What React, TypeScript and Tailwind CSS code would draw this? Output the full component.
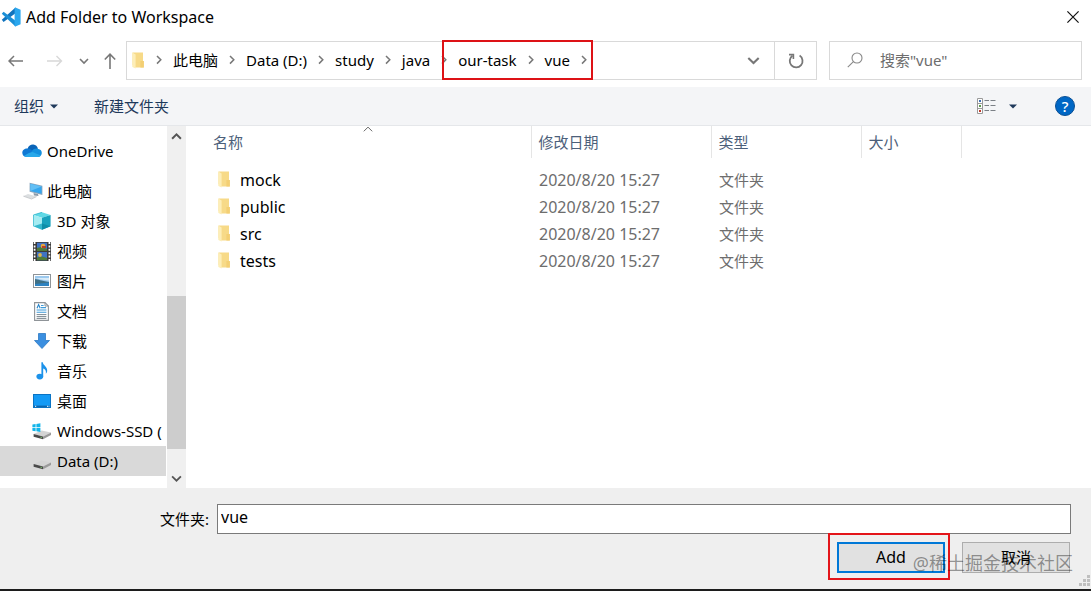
import type { ReactNode } from 'react'

const crumbs = ['此电脑', 'Data (D:)', 'study', 'java']
const activeCrumbs = ['our-task', 'vue']

const files = [
  { name: 'mock', date: '2020/8/20 15:27', type: '文件夹' },
  { name: 'public', date: '2020/8/20 15:27', type: '文件夹' },
  { name: 'src', date: '2020/8/20 15:27', type: '文件夹' },
  { name: 'tests', date: '2020/8/20 15:27', type: '文件夹' },
]

const CodeLogo = () => (
  <svg width="20" height="20" viewBox="0 0 20 20">
    <path d="M14.5 0.6 L0.8 12.8 L2.6 14.9 L15.5 5.4 Z" fill="#1173bd" />
    <path d="M0.8 6.8 L2.6 4.8 L15.5 14.4 L14.5 19.4 Z" fill="#1b8fd6" />
    <path d="M14.4 0.4 L19.6 2.8 V17.2 L14.4 19.6 L13.6 19 V1 Z" fill="#2ba7ee" />
  </svg>
)

const FolderIcon = () => (
  <svg width="12" height="17" viewBox="0 0 12 17" className="shrink-0">
    <path d="M0.5 0.5 H11 V9 H11.8 V15.5 H3 L0.5 13 Z" fill="#f7da88" />
    <path d="M0.3 0.5 L3.6 2.4 V16.5 L0.3 15 Z" fill="#fdeeb8" />
    <path d="M8.4 9 H11.8 V15.5 H8.4 Z" fill="#f3cf74" />
  </svg>
)

const Chevron = () => (
  <svg width="6" height="10" viewBox="0 0 6 10">
    <path d="M1 1 L4.8 4.8 L1 8.6" fill="none" stroke="#777" strokeWidth="1.5" />
  </svg>
)

const DownChevron = ({ size = 10, color = '#777' }: { size?: number; color?: string }) => (
  <svg width={size} height={size} viewBox="0 0 10 10">
    <path d="M1 3 L5 7 L9 3" fill="none" stroke={color} strokeWidth="1.6" />
  </svg>
)

const UpChevron = () => (
  <svg width="11" height="11" viewBox="0 0 10 10">
    <path d="M1 7 L5 3 L9 7" fill="none" stroke="#555" strokeWidth="1.8" />
  </svg>
)

const Caret = () => (
  <svg width="8" height="5" viewBox="0 0 8 5">
    <path d="M0 0.5 H8 L4 4.5 Z" fill="#1e395b" />
  </svg>
)

const CloudIcon = () => (
  <svg width="20" height="14" viewBox="0 0 20 14">
    <path d="M5.5 5 C6.5 1.5 9.2 0.4 11.3 0.6 C13.8 0.9 15.3 2.4 15.9 4.6 L11 9 Z" fill="#0a64b8" />
    <path d="M4.6 12.9 C1.8 12.9 0.3 11 0.3 8.8 C0.3 6.3 2.6 4.4 5.2 4.5 C7.6 4.2 9.5 5.8 12 8 L8 12.9 Z" fill="#0f78d4" />
    <path d="M9.8 7 C11.4 4.6 14.6 4 16.2 5 C18.7 5.2 19.8 7 19.8 9 C19.8 11.4 18 12.9 16 12.9 H8 Z" fill="#1490df" />
    <path d="M2 12 C5 9.5 8 8.6 10.5 8 L18.8 11.6 C18 12.6 17 12.9 16 12.9 H4.6 C3.6 12.9 2.7 12.6 2 12 Z" fill="#28a8ea" />
  </svg>
)

const ComputerIcon = () => (
  <svg width="20" height="18" viewBox="0 0 20 18">
    <path d="M6.6 0.8 L19.4 3.8 V13 L6.6 9.8 Z" fill="#8aa5bd" />
    <path d="M7.4 1.8 L18.6 4.5 V11.8 L7.4 9 Z" fill="#35a6ee" />
    <path d="M7.4 1.8 L18.6 4.5 L7.4 9 Z" fill="#62bff5" />
    <path d="M10.5 11 L15 12 L15.5 14 L11 13.5 Z" fill="#8b9aa8" />
    <path d="M0.4 14 L5 12 L13.6 14.4 L8.6 16.8 Z" fill="#dcdfe1" />
    <path d="M0.4 14.2 L8.6 17 L13.6 14.6" fill="none" stroke="#b4b8bb" strokeWidth="0.7" />
  </svg>
)

const CubeIcon = () => (
  <svg width="18" height="18" viewBox="0 0 18 18">
    <path d="M9 0.3 L17.6 3 L9 5.8 L0.4 3 Z" fill="#5fd9e6" />
    <path d="M0.4 3 L9 5.8 V17.7 L0.4 14.2 Z" fill="#a5ecf2" />
    <path d="M0.4 14.2 L9 11.5 V17.7 Z" fill="#35b8ce" />
    <path d="M17.6 3 L9 5.8 V17.7 L17.6 14.2 Z" fill="#18a2bd" />
    <path d="M9 11.5 L17.6 14.2 L9 17.7 Z" fill="#0d8ea8" />
    <path d="M0.4 3 V14.2 M9 0.3 L0.4 3" stroke="#2bb5cc" strokeWidth="0.8" fill="none" />
  </svg>
)

const VideoIcon = () => (
  <svg width="18" height="19" viewBox="0 0 18 19">
    <rect width="18" height="19" fill="#3b3b3b" />
    <rect x="4" y="0.8" width="10" height="8.2" fill="#3f73c4" />
    <rect x="4" y="10" width="10" height="8.2" fill="#3f73c4" />
    <path d="M4 9 V6 L8 5 L14 7 V9 Z M4 18.2 V15.4 L9 14.5 L14 16 V18.2 Z" fill="#4f7b3a" />
    <circle cx="10" cy="4" r="2.3" fill="#e9a63a" />
    <circle cx="7" cy="13" r="1.9" fill="#d9b64c" />
    <path d="M9 4 H13 V6 H9 Z" fill="#b5402c" />
    <path d="M1.6 0 V19 M16.4 0 V19" stroke="#fff" strokeWidth="1.7" strokeDasharray="2 1.4" />
  </svg>
)

const PictureIcon = () => (
  <svg width="18" height="14" viewBox="0 0 18 14">
    <rect x="0.5" y="0.5" width="17" height="13" fill="#fff" stroke="#8f9498" />
    <rect x="2" y="2" width="14" height="10" fill="#9cc9ee" />
    <path d="M2 5 C5 5.5 8 6.6 16 8 V12 H2 Z" fill="#3f7086" />
    <path d="M2 10 L16 8.6 V12 H2 Z" fill="#2e83c2" />
    <path d="M2 4 L8 5.5 L16 6.5 V4 Z" fill="#d9ecf9" />
  </svg>
)

const DocumentIcon = () => (
  <svg width="15" height="19" viewBox="0 0 15 19">
    <path d="M0.6 0.6 H11 L14.4 4 V18.4 H0.6 Z" fill="#fff" stroke="#8f9498" strokeWidth="1.1" />
    <path d="M11 0.6 V4 H14.4" fill="none" stroke="#8f9498" />
    <path d="M3 6.2 L4.6 2.6 L6.2 6.2" fill="none" stroke="#2383c9" strokeWidth="1.1" />
    <path d="M7 3.5 H9.6 M7 5.6 H12 M2.6 8 H12.4 M2.6 10.3 H12.4" stroke="#3f9bd9" strokeWidth="1.1" />
    <path d="M2.6 12.6 H12.4 M2.6 14.6 H12.4 M2.6 16.4 H12.4" stroke="#7a8790" />
  </svg>
)

const DownloadIcon = () => (
  <svg width="16" height="16" viewBox="0 0 16 16">
    <path d="M4.5 0.5 H11.5 V7.5 H15.5 L8 15.5 L0.5 7.5 H4.5 Z" fill="#3b8fe0" stroke="#2b78c4" strokeWidth="0.8" />
  </svg>
)

const MusicIcon = () => (
  <svg width="12" height="18" viewBox="0 0 12 18">
    <ellipse cx="3.8" cy="14.6" rx="3.4" ry="2.8" fill="#1c92ea" />
    <path d="M5.4 0.3 H6.8 C7.2 3.6 11.6 4.6 11.2 9 C11 10.4 10.4 11.2 9.8 11.8 C10.6 8.6 8.6 7 7.2 6.6 V14.6 H5.4 Z" fill="#1c92ea" />
  </svg>
)

const DesktopIcon = () => (
  <svg width="18" height="14" viewBox="0 0 18 14">
    <rect x="0.5" y="0.5" width="17" height="13" fill="#149af5" stroke="#0b74c4" />
    <path d="M1 12.3 H17" stroke="#0c66ae" strokeWidth="1.4" />
    <path d="M2 12.3 H3.2 M14 12.3 H15 M15.6 12.3 H16.4" stroke="#fff" />
  </svg>
)

const DriveIcon = ({ windows = false }: { windows?: boolean }) => (
  <svg width="20" height="17" viewBox="0 0 20 17">
    <path d="M1.6 11 L9.6 7.4 L19 9.4 L11 13.4 Z" fill="#d4d4d4" />
    <path d="M1.6 11 L11 13.4 V16.2 L1.6 13.8 Z" fill="#4a4a4a" />
    <path d="M11 13.4 L19 9.4 V12 L11 16.2 Z" fill="#9a9a9a" />
    <path d="M8.4 14.2 L10 14.6" stroke="#7fd36a" strokeWidth="0.8" />
    {windows && (
      <path
        d="M0.4 1.6 L3.6 1 V4.2 H0.4 Z M4.4 0.9 L8.4 0.2 V4.2 H4.4 Z M0.4 5 H3.6 V8.2 L0.4 7.7 Z M4.4 5 H8.4 V9 L4.4 8.3 Z"
        fill="#12b5ea"
      />
    )}
  </svg>
)

const places: { label: string; icon: ReactNode; selected?: boolean }[] = [
  { label: '3D 对象', icon: <CubeIcon /> },
  { label: '视频', icon: <VideoIcon /> },
  { label: '图片', icon: <PictureIcon /> },
  { label: '文档', icon: <DocumentIcon /> },
  { label: '下载', icon: <DownloadIcon /> },
  { label: '音乐', icon: <MusicIcon /> },
  { label: '桌面', icon: <DesktopIcon /> },
  { label: 'Windows-SSD (', icon: <DriveIcon windows /> },
  { label: 'Data (D:)', icon: <DriveIcon />, selected: true },
]

function Crumb({ label }: { label: string }) {
  return (
    <>
      <button type="button" className="whitespace-nowrap">
        {label}
      </button>
      <span className="flex w-7 shrink-0 justify-center">
        <Chevron />
      </span>
    </>
  )
}

function TitleBar() {
  return (
    <header className="flex h-[35px] items-center justify-between pr-3 pb-0.5 pl-px">
      <div className="flex items-center gap-[5px]">
        <CodeLogo />
        <h1 className="text-base">Add Folder to Workspace</h1>
      </div>
      <button type="button" aria-label="Close">
        <svg width="12" height="12" viewBox="0 0 12 12">
          <path d="M0.4 0.4 L11.6 11.6 M11.6 0.4 L0.4 11.6" stroke="#111" strokeWidth="1.2" />
        </svg>
      </button>
    </header>
  )
}

function NavBar() {
  return (
    <nav className="flex items-center pt-1.5 pr-[9px] pb-[7px] pl-2">
      <div className="flex w-[118px] shrink-0 items-center">
        <button type="button" aria-label="Back">
          <svg width="16" height="12" viewBox="0 0 16 12">
            <path d="M15 6 H1 M6 1 L1 6 L6 11" fill="none" stroke="#777" strokeWidth="1.5" />
          </svg>
        </button>
        <button type="button" aria-label="Forward" className="ml-[23px]">
          <svg width="16" height="12" viewBox="0 0 16 12">
            <path d="M0 6 H14 M9.5 1 L14.5 6 L9.5 11" fill="none" stroke="#d8d8d8" strokeWidth="1.4" />
          </svg>
        </button>
        <button type="button" aria-label="Recent" className="ml-4">
          <DownChevron />
        </button>
        <button type="button" aria-label="Up" className="ml-[15px]">
          <svg width="12" height="16" viewBox="0 0 12 16">
            <path d="M6 16 V1 M0.8 6.5 L6 1.2 L11.2 6.5" fill="none" stroke="#777" strokeWidth="1.6" />
          </svg>
        </button>
      </div>
      <div className="flex h-[39px] min-w-0 flex-1 items-center border border-[#d9d9d9]">
        <div className="flex flex-1 items-center pb-px pl-[5px]">
          <FolderIcon />
          <span className="flex w-[29px] justify-center">
            <Chevron />
          </span>
          {crumbs.map((label) => (
            <Crumb key={label} label={label} />
          ))}
          <span className="relative flex items-center">
            {activeCrumbs.map((label) => (
              <Crumb key={label} label={label} />
            ))}
            <span className="absolute -inset-y-2 right-[5px] -left-4 border-2 border-[#dd1216]" />
          </span>
        </div>
        <button type="button" aria-label="History" className="px-3.5">
          <DownChevron size={13} />
        </button>
        <button
          type="button"
          aria-label="Refresh"
          className="flex h-full w-[42px] items-center justify-center border-l border-[#d9d9d9]"
        >
          <svg width="16" height="16" viewBox="0 0 16 16">
            <path d="M11.6 2.6 A6.4 6.4 0 1 1 4.4 2.8" fill="none" stroke="#777" strokeWidth="1.8" />
            <path d="M1 1.6 H5.4 V6" fill="none" stroke="#777" strokeWidth="1.6" />
          </svg>
        </button>
      </div>
      <label className="ml-3 flex h-[39px] w-[253px] shrink-0 items-center gap-[17px] border border-[#d9d9d9] pb-px pl-[17px]">
        <svg width="16" height="16" viewBox="0 0 16 16" className="shrink-0">
          <circle cx="10" cy="6" r="5" fill="none" stroke="#888" strokeWidth="1.1" />
          <path d="M6.4 9.6 L0.8 15.2" stroke="#888" strokeWidth="1.1" />
        </svg>
        <input
          type="search"
          aria-label="Search"
          placeholder={'搜索"vue"'}
          className="w-full min-w-0 outline-none placeholder:text-[#6d6d6d]"
        />
      </label>
    </nav>
  )
}

function Toolbar() {
  return (
    <div className="flex h-[39px] items-center border-b border-[#e5e7ea] bg-[#f4f5f7] pr-4 pl-3.5 text-[#1e395b]">
      <button type="button" className="flex items-center gap-1.5">
        组织
        <Caret />
      </button>
      <button type="button" className="ml-9">
        新建文件夹
      </button>
      <button type="button" aria-label="View" className="ml-auto flex items-center gap-3">
        <svg width="20" height="16" viewBox="0 0 20 16">
          <path d="M0.5 0.5 H5.5 V15.5 H0.5 Z M0.5 5.5 H5.5 M0.5 10.5 H5.5" fill="#fff" stroke="#9a9a9a" />
          <path d="M2 3 H4" stroke="#3d6fb5" strokeWidth="2" />
          <path d="M2 8 H4" stroke="#5a9a4a" strokeWidth="2" />
          <path d="M2 13 H4" stroke="#c0392b" strokeWidth="2" />
          <path d="M7.5 2.5 H12 M13.5 2.5 H18.5 M7.5 7.5 H12 M13.5 7.5 H18.5 M7.5 12.5 H12 M13.5 12.5 H18.5" stroke="#7b8086" />
        </svg>
        <Caret />
      </button>
      <button
        type="button"
        aria-label="Help"
        className="ml-[38px] flex size-5 items-center justify-center rounded-full border border-[#0a4f94] bg-[#0067c5] font-medium text-white"
      >
        ?
      </button>
    </div>
  )
}

function Sidebar() {
  return (
    <aside className="flex w-[187px] shrink-0">
      <div className="w-[167px] overflow-hidden pt-2.5">
        <button type="button" className="flex h-[30px] w-full items-center gap-[5px] pl-[22px]">
          <CloudIcon />
          OneDrive
        </button>
        <button type="button" className="mt-2.5 flex h-[30px] w-full items-center gap-1 pl-[23px]">
          <ComputerIcon />
          此电脑
        </button>
        {places.map((place) => (
          <button
            key={place.label}
            type="button"
            className={`flex h-[30px] w-[166px] items-center gap-[5px] pl-[31px] whitespace-nowrap ${
              place.selected ? 'bg-[#d9d9d9]' : ''
            }`}
          >
            <span className="flex w-[21px] shrink-0 justify-center">{place.icon}</span>
            {place.label}
          </button>
        ))}
      </div>
      <div className="flex w-[19px] flex-col items-center bg-[#f0f0f0]">
        <button type="button" aria-label="Scroll up" className="flex h-5 items-center">
          <UpChevron />
        </button>
        <div className="flex w-full flex-1 flex-col">
          <div className="flex-[150]" />
          <div className="flex-[153] bg-[#cdcdcd]" />
          <div className="flex-[19]" />
        </div>
        <button type="button" aria-label="Scroll down" className="flex h-5 items-center">
          <DownChevron size={11} color="#555" />
        </button>
      </div>
    </aside>
  )
}

function FileTable() {
  return (
    <div className="min-w-0 flex-1 pl-[19px]">
      <table className="w-full table-fixed text-left">
        <colgroup>
          <col className="w-[325px]" />
          <col className="w-[180px]" />
          <col className="w-[150px]" />
          <col className="w-[100px]" />
          <col />
        </colgroup>
        <thead className="text-[#4c607a]">
          <tr className="h-8">
            <th className="relative border-r border-[#e5e5e5] pl-[7px] font-normal">
              名称
              <svg width="10" height="6" viewBox="0 0 10 6" className="absolute top-0 left-1/2 -translate-x-1/2">
                <path d="M0.8 5.3 L5 1.1 L9.2 5.3" fill="none" stroke="#666" />
              </svg>
            </th>
            <th className="border-r border-[#e5e5e5] pl-[7px] font-normal">修改日期</th>
            <th className="border-r border-[#e5e5e5] pl-[7px] font-normal">类型</th>
            <th className="border-r border-[#e5e5e5] pl-[7px] font-normal">大小</th>
            <td />
          </tr>
        </thead>
        <tbody className="text-[#6d6d6d] before:block before:h-2">
          {files.map((file) => (
            <tr key={file.name} className="h-[27px]">
              <td className="pl-3 text-base text-black">
                <span className="flex items-center gap-2.5">
                  <FolderIcon />
                  {file.name}
                </span>
              </td>
              <td className="pl-2 text-base">{file.date}</td>
              <td className="pl-2">{file.type}</td>
              <td />
              <td />
            </tr>
          ))}
        </tbody>
      </table>
    </div>
  )
}

function Footer() {
  return (
    <footer className="relative border-b-2 border-[#1c1c1c] bg-[#efefef] pt-4 pr-5 pb-4">
      <div className="flex items-center">
        <label htmlFor="folder" className="w-[217px] shrink-0 pr-2 text-right">
          文件夹:
        </label>
        <input
          id="folder"
          type="text"
          defaultValue="vue"
          className="h-[30px] min-w-0 flex-1 border border-[#7a7a7a] bg-white px-[3px] pb-1 text-base outline-none"
        />
      </div>
      <div className="mt-2 mr-px flex justify-end gap-[17px]">
        <div className="relative">
          <button type="button" className="h-[31px] w-[108px] border-2 border-[#0078d7] bg-[#e1e1e1] pb-0.5 text-base">
            Add
          </button>
          <span className="absolute -top-[9px] -right-[5px] -bottom-[7px] -left-[9px] border-2 border-[#e3151a]" />
        </div>
        <button type="button" className="h-[31px] w-[108px] border border-[#adadad] bg-[#e1e1e1] pb-0.5">
          取消
        </button>
      </div>
      <span className="absolute right-[18px] bottom-3 text-lg whitespace-nowrap text-black/40">
        @稀土掘金技术社区
      </span>
      <svg width="12" height="12" viewBox="0 0 12 12" className="absolute right-0 bottom-0.5">
        <path
          d="M8 0 h3 v3 h-3 Z M4 4 h3 v3 h-3 Z M8 4 h3 v3 h-3 Z M0 8 h3 v3 h-3 Z M4 8 h3 v3 h-3 Z M8 8 h3 v3 h-3 Z"
          fill="#bfbfbf"
        />
      </svg>
    </footer>
  )
}

export default function App() {
  return (
    <div className="flex min-h-screen flex-col bg-white font-['Noto_Sans','Noto_Sans_CJK_SC',sans-serif] text-[15px] leading-6 text-black">
      <TitleBar />
      <NavBar />
      <Toolbar />
      <main className="flex flex-1">
        <Sidebar />
        <FileTable />
      </main>
      <Footer />
    </div>
  )
}
